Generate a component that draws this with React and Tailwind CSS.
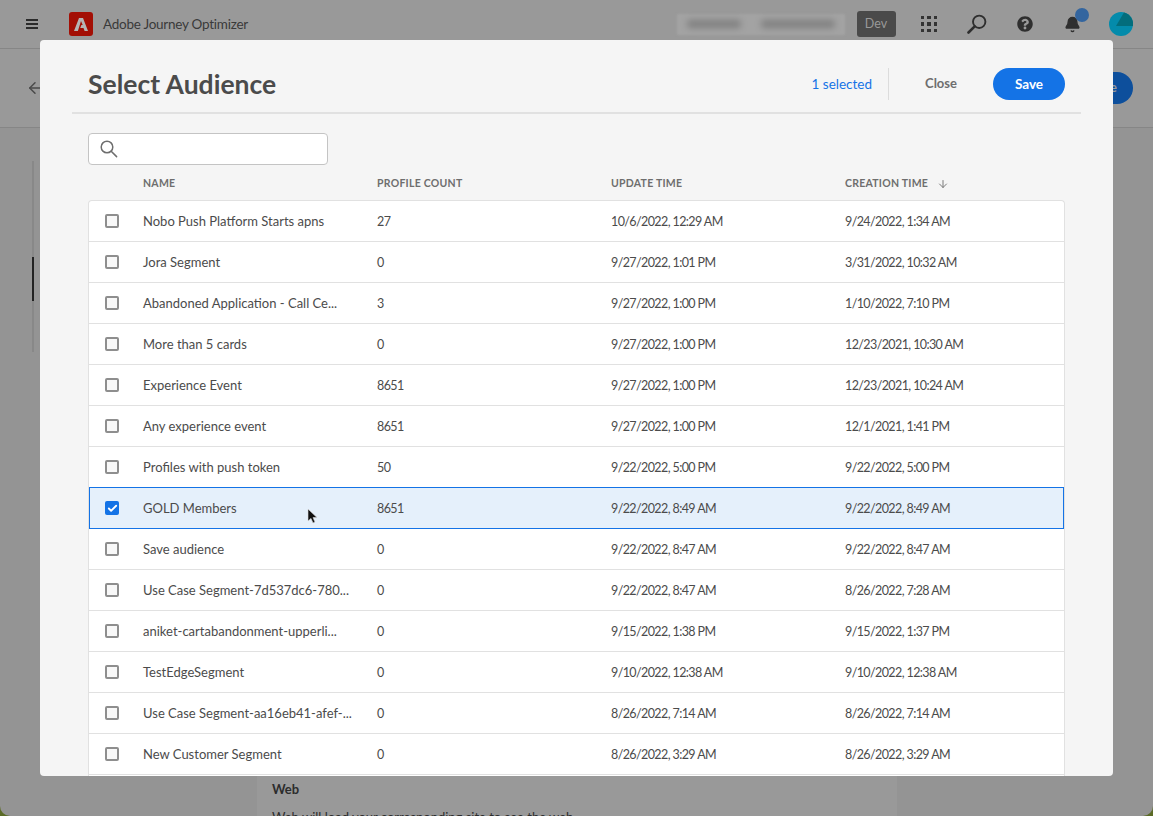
import React from "react";
import { ArrowDown, ArrowLeft, Check, Bell } from "lucide-react";
import { FaQuestionCircle } from "react-icons/fa";

const font = { fontFamily: 'Lato, "Noto Sans", sans-serif' };

const rows = [
  ["Nobo Push Platform Starts apns", "27", "10/6/2022, 12:29 AM", "9/24/2022, 1:34 AM"],
  ["Jora Segment", "0", "9/27/2022, 1:01 PM", "3/31/2022, 10:32 AM"],
  ["Abandoned Application - Call Ce...", "3", "9/27/2022, 1:00 PM", "1/10/2022, 7:10 PM"],
  ["More than 5 cards", "0", "9/27/2022, 1:00 PM", "12/23/2021, 10:30 AM"],
  ["Experience Event", "8651", "9/27/2022, 1:00 PM", "12/23/2021, 10:24 AM"],
  ["Any experience event", "8651", "9/27/2022, 1:00 PM", "12/1/2021, 1:41 PM"],
  ["Profiles with push token", "50", "9/22/2022, 5:00 PM", "9/22/2022, 5:00 PM"],
  ["GOLD Members", "8651", "9/22/2022, 8:49 AM", "9/22/2022, 8:49 AM", true],
  ["Save audience", "0", "9/22/2022, 8:47 AM", "9/22/2022, 8:47 AM"],
  ["Use Case Segment-7d537dc6-780...", "0", "9/22/2022, 8:47 AM", "8/26/2022, 7:28 AM"],
  ["aniket-cartabandonment-upperli...", "0", "9/15/2022, 1:38 PM", "9/15/2022, 1:37 PM"],
  ["TestEdgeSegment", "0", "9/10/2022, 12:38 AM", "9/10/2022, 12:38 AM"],
  ["Use Case Segment-aa16eb41-afef-...", "0", "8/26/2022, 7:14 AM", "8/26/2022, 7:14 AM"],
  ["New Customer Segment", "0", "8/26/2022, 3:29 AM", "8/26/2022, 3:29 AM"],
];

function Row({ row }) {
  const [name, count, updated, created, selected] = row;
  return (
    <div
      className={
        "flex shrink-0 items-center pt-[1px] text-[#4b4b4b] " +
        (selected
          ? "relative -mt-px h-[42px] border border-[#1473e6] bg-[#e5f0fb]"
          : "h-[41px] border-b border-[#e1e1e1]")
      }
    >
      <div className={"mb-[1px] flex w-[54px] shrink-0 " + (selected ? "pl-[15px]" : "pl-[16px]")}>
        {selected ? (
          <span className="flex h-[14px] w-[14px] items-center justify-center rounded-[2px] bg-[#1473e6]">
            <Check size={11} strokeWidth={4} className="text-white" />
          </span>
        ) : (
          <span className="h-[14px] w-[14px] rounded-[2px] border-2 border-[#8e8e8e] bg-[#f8f8f8]" />
        )}
      </div>
      <div className={"w-[234px] shrink-0 whitespace-nowrap text-[13px] " + (selected ? "-ml-px" : "")}>{name}</div>
      <div className="w-[234px] shrink-0 pt-[2px] text-[12.5px] tracking-[-0.6px]">{count}</div>
      <div className="w-[234px] shrink-0 pt-[2px] text-[12.5px] tracking-[-0.6px]">{updated}</div>
      <div className="pt-[2px] text-[12.5px] tracking-[-0.6px]">{created}</div>
    </div>
  );
}

function Background() {
  return (
    <div className="flex h-full flex-col bg-[#949494]">
      <header className="flex h-[49px] shrink-0 items-center border-b border-[#868686] bg-[#999999]">
        <div className="ml-[26px] flex w-[12px] flex-col gap-[2px]">
          <span className="h-[2px] bg-[#2b2b2b]" />
          <span className="h-[2px] bg-[#2b2b2b]" />
          <span className="h-[2px] bg-[#2b2b2b]" />
        </div>
        <div className="ml-[31px] flex h-[24px] w-[24px] items-center justify-center rounded-[3px] bg-[#a30f05]">
          <svg width="14" height="13" viewBox="0 0 14 13">
            <path d="M5 0h4l5 13h-3.4L9.5 10H6.2l1.2-2.9h1.3L7 3 3.9 13H0z" fill="#b5b5b5" />
          </svg>
        </div>
        <span className="ml-[10px] text-[13.5px] tracking-[-0.25px] text-[#3a3a3a]">Adobe Journey Optimizer</span>
        <div className="ml-auto flex items-center">
          <div className="h-[21px] w-[168px] bg-[#a3a3a3] blur-[1px]">
            <div className="mx-[10px] mt-[6px] flex gap-[20px]">
              <span className="h-[8px] w-[56px] rounded-full bg-[#7f7f7f] blur-[3px]" />
              <span className="h-[8px] w-[76px] rounded-full bg-[#7f7f7f] blur-[3px]" />
            </div>
          </div>
          <span className="ml-[12px] flex h-[26px] w-[39px] items-center justify-center rounded-[3px] bg-[#4a4a4a] text-[12.5px] text-[#999999]">
            Dev
          </span>
          <div className="ml-[25px] grid grid-cols-3 gap-[3px]">
            {[...Array(9)].map((_, i) => (
              <span key={i} className="h-[3.5px] w-[3.5px] bg-[#333333]" />
            ))}
          </div>
          <svg width="20" height="20" viewBox="0 0 20 20" className="ml-[30px] text-[#2f2f2f]" fill="none" stroke="currentColor">
            <circle cx="12.2" cy="7.8" r="6.2" strokeWidth="1.9" />
            <path d="M7.7 12.3L1.5 18.5" strokeWidth="2.6" strokeLinecap="round" />
          </svg>
          <FaQuestionCircle size={16} className="ml-[30px] text-[#2f2f2f]" />
          <div className="relative ml-[31px]">
            <Bell size={17} fill="#2f2f2f" className="text-[#2f2f2f]" />
            <span className="absolute -right-[8px] -top-[8px] h-[14px] w-[14px] rounded-full bg-[#33659f]" />
          </div>
          <svg width="24" height="24" viewBox="0 0 24 24" className="ml-[28px] mr-[20px]">
            <circle cx="12" cy="12" r="12" fill="#048bab" />
            <path d="M15 0.5A12 12 0 0 1 24 14H7z" fill="#036d7c" />
          </svg>
        </div>
      </header>
      <div className="flex h-[79px] shrink-0 items-center justify-between border-b border-[#868686] bg-[#999999] pl-[26px] pr-[20px]">
        <ArrowLeft size={18} className="text-[#4a4a4a]" />
        <span className="flex h-[32px] w-[72px] items-center justify-end rounded-full bg-[#0d4f9c] pr-[16px] text-[13px] font-bold text-[#999999]">
          Save
        </span>
      </div>
      <div className="flex flex-1 overflow-hidden">
        <div className="w-[257px] shrink-0 pl-[32px] pt-[33px]">
          <div className="h-[191px] w-[2px] bg-[#888888] pt-[96px]">
            <div className="h-[44px] w-[2px] bg-[#222222]" />
          </div>
        </div>
        <div className="w-[640px] shrink-0 bg-[#999999] pl-[15px] pt-[652px] text-[13px] text-[#2c2c2c]">
          <p className="font-bold">Web</p>
          <p className="mt-[8px] whitespace-nowrap">Web will load your corresponding site to see the web</p>
        </div>
      </div>
    </div>
  );
}

export default function App() {
  return (
    <div style={font} className="relative h-[816px] w-[1153px] overflow-hidden bg-[#5b6b26]">
      <div className="h-full overflow-hidden rounded-b-[10px]">
        <Background />
      </div>

      {/* dialog */}
      <div className="absolute bottom-[40px] left-[40px] right-[40px] top-[40px] flex flex-col overflow-hidden rounded-[4px] bg-[#f5f5f5] px-[32px]">
        <div className="flex h-[74px] shrink-0 items-center border-b-2 border-[#e1e1e1] px-[16px] pt-[16px]">
          <h1 className="pt-[2px] text-[26.5px] font-bold text-[#4b4b4b]">Select Audience</h1>
          <span className="ml-auto text-[13.5px] text-[#1473e6]">1 selected</span>
          <span className="ml-[16px] h-[32px] w-px bg-[#dcdcdc]" />
          <span className="ml-[36px] text-[13px] font-bold text-[#6e6e6e]">Close</span>
          <span className="ml-[36px] flex h-[32px] w-[72px] items-center justify-center rounded-full bg-[#1473e6] text-[13.5px] font-bold text-white">
            Save
          </span>
        </div>

        <div className="ml-[16px] mt-[19px] flex h-[32px] w-[240px] shrink-0 items-center rounded-[4px] border border-[#c4c4c4] bg-white pl-[11px]">
          <svg width="18" height="18" viewBox="0 0 18 18" fill="none" stroke="#6e6e6e" strokeWidth="1.5">
            <circle cx="7" cy="7" r="5.8" />
            <path d="M11.2 11.2L16.6 16.6" strokeLinecap="round" />
          </svg>
        </div>

        <div className="ml-[16px] flex h-[35px] shrink-0 items-center pt-[3px] text-[10.5px] font-bold tracking-[0.25px] text-[#6e6e6e]">
          <span className="ml-[55px] w-[234px]">NAME</span>
          <span className="w-[234px]">PROFILE COUNT</span>
          <span className="w-[234px]">UPDATE TIME</span>
          <span className="flex items-center">
            CREATION TIME
            <ArrowDown size={12} strokeWidth={1.8} className="ml-[9px]" />
          </span>
        </div>

        <div className="ml-[16px] mr-[16px] flex min-h-0 flex-1 flex-col rounded-t-[4px] border border-b-0 border-[#e1e1e1] bg-white">
          {rows.map((row) => (
            <Row key={row[0]} row={row} />
          ))}
        </div>
      </div>

      {/* pointer */}
      <svg width="12" height="18" viewBox="0 0 12 18" className="absolute left-[307px] top-[508px]">
        <path d="M1 1v12l3-2.6 2 4.6 2-1-2-4.4h4z" fill="#111" stroke="#ddd" strokeWidth="0.6" />
      </svg>
    </div>
  );
}
